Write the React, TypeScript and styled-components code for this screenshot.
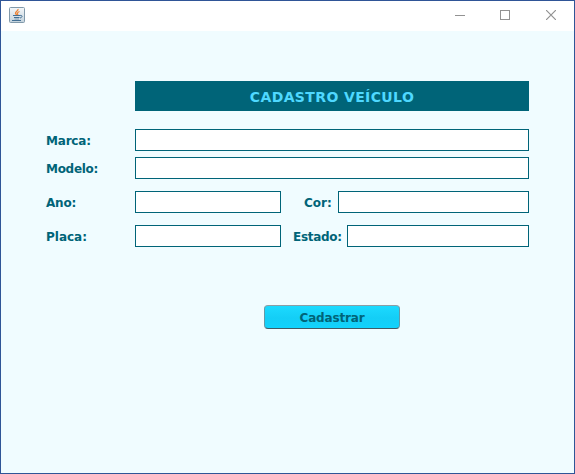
import React from "react";
import styled, { createGlobalStyle } from "styled-components";

const GlobalStyle = createGlobalStyle`
  * { box-sizing: border-box; }
  body { margin: 0; overflow: hidden; }
`;

const Window = styled.div`
  width: 575px;
  height: 474px;
  border: 1px solid #2f5597;
  background: #f0fcff;
  display: flex;
  flex-direction: column;
  font-family: "DejaVu Sans", Verdana, sans-serif;
  font-weight: bold;
  color: #006478;
`;

const TitleBar = styled.header`
  height: 30px;
  flex: none;
  background: #fff;
  display: flex;
  align-items: center;
  justify-content: space-between;
  padding: 0 18px 0 8px;
`;

const AppIcon = styled.svg`
  width: 16px;
  height: 16px;
  display: block;
  margin-top: -2px;
`;

const WindowControls = styled.div`
  display: flex;
  gap: 35px;
  margin-top: -2px;
`;

const ControlIcon = styled.svg`
  width: 10px;
  height: 10px;
  display: block;
  fill: none;
  stroke: #929292;

  &:last-child { margin-left: 1px; }
`;

const Form = styled.main`
  width: 483px;
  margin: 50px 0 0 45px;
  display: flex;
  flex-direction: column;
`;

const Banner = styled.h1`
  width: 394px;
  height: 30px;
  margin: 0 0 18px auto;
  background: #006478;
  color: #4fd8ff;
  font-size: 14px;
  line-height: 32px;
  letter-spacing: 0.38px;
  text-align: center;
`;

const Row = styled.div<{ $gap: number }>`
  height: 22px;
  margin-bottom: ${(p) => p.$gap}px;
  display: flex;
`;

const Label = styled.label<{ $width: number; $indent?: number; $spacing?: number }>`
  width: ${(p) => p.$width}px;
  flex: none;
  margin-left: ${(p) => p.$indent ?? 0}px;
  font-size: 12px;
  line-height: 25px;
  letter-spacing: ${(p) => p.$spacing ?? -0.2}px;
  white-space: nowrap;
`;

const Field = styled.input<{ $width: number }>`
  width: ${(p) => p.$width}px;
  height: 22px;
  margin: 0;
  padding: 0 3px;
  border: 1px solid #006478;
  border-radius: 0;
  background: #fff;
  outline: none;
`;

const SubmitButton = styled.button`
  width: 136px;
  height: 24px;
  margin: 40px 0 0 218px;
  padding: 1px 0 0;
  border: 1px solid;
  border-color: #8b9da4 #6299a8 #405b66;
  border-radius: 4px;
  background: linear-gradient(#1cdaff, #14cef6 55%, #12d2fc);
  color: #006478;
  font: bold 12px "DejaVu Sans", Verdana, sans-serif;
  letter-spacing: -0.15px;
`;

export default function App() {
  return (
    <>
      <GlobalStyle />
      <Window>
        <TitleBar>
          <AppIcon viewBox="0 0 16 16">
            <defs>
              <linearGradient id="tile" x2="0" y2="1">
                <stop stopColor="#f4f7f9" />
                <stop offset="1" stopColor="#c3d2dc" />
              </linearGradient>
            </defs>
            <rect x=".5" y=".5" width="15" height="15" rx="1" fill="url(#tile)" stroke="#8199aa" />
            <path d="M9 2C9.5 4 6 4.5 6.5 6.5L8 8.5M10.5 4.5C8 5.5 8 6.3 9 8" fill="none" stroke="#ee8335" strokeWidth="1.3" />
            <path d="M4 8.5H11M5 10.5H10.5M3 13.5H12M11 8.5C14 8 13.5 10.5 11 11" fill="none" stroke="#436f94" />
            <path d="M5.5 12H10" stroke="#436f94" strokeWidth=".6" />
          </AppIcon>
          <WindowControls>
            <ControlIcon viewBox="0 0 10 10"><path d="M0 5.5H10" /></ControlIcon>
            <ControlIcon viewBox="0 0 10 10"><rect x=".5" y=".5" width="9" height="9" /></ControlIcon>
            <ControlIcon viewBox="0 0 10 10"><path d="M0 0L10 10M10 0L0 10" strokeWidth="1.2" /></ControlIcon>
          </WindowControls>
        </TitleBar>
        <Form>
          <Banner>CADASTRO VEÍCULO</Banner>
          <Row $gap={6}>
            <Label $width={89} htmlFor="marca">Marca:</Label>
            <Field $width={394} id="marca" />
          </Row>
          <Row $gap={12}>
            <Label $width={89} $spacing={-0.3} htmlFor="modelo">Modelo:</Label>
            <Field $width={394} id="modelo" />
          </Row>
          <Row $gap={12}>
            <Label $width={89} htmlFor="ano">Ano:</Label>
            <Field $width={146} id="ano" />
            <Label $width={34} $indent={23} $spacing={0} htmlFor="cor">Cor:</Label>
            <Field $width={191} id="cor" />
          </Row>
          <Row $gap={18}>
            <Label $width={89} $spacing={0} htmlFor="placa">Placa:</Label>
            <Field $width={146} id="placa" />
            <Label $width={54} $indent={12} $spacing={-0.3} htmlFor="estado">Estado:</Label>
            <Field $width={182} id="estado" />
          </Row>
          <SubmitButton type="button">Cadastrar</SubmitButton>
        </Form>
      </Window>
    </>
  );
}
